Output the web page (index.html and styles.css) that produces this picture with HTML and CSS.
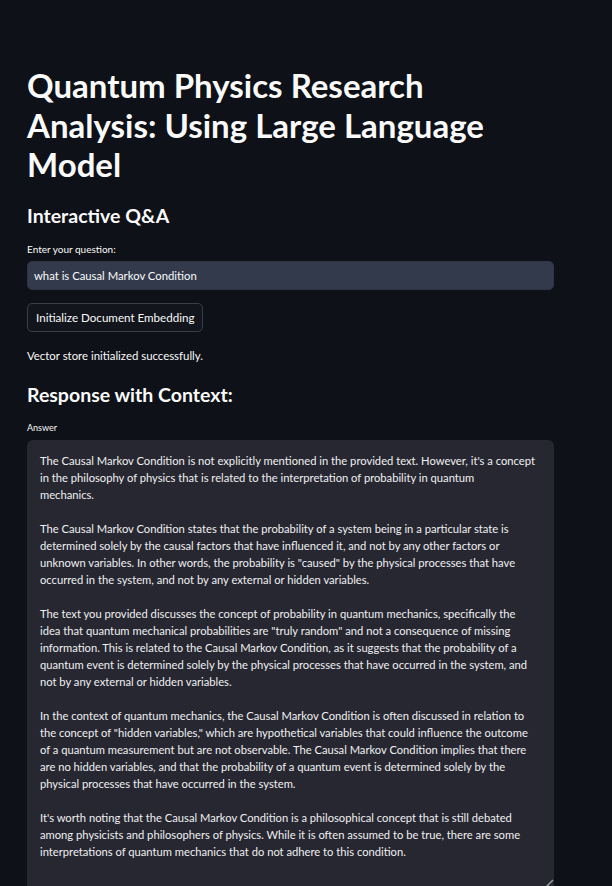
FILE: index.html
```html
<!DOCTYPE html>
<html>
<head>
<meta charset="utf-8">
<link rel="stylesheet" href="styles.css">
</head>
<body>
<main class="main">
  <h1 class="title">Quantum Physics Research<br>Analysis: Using Large Language<br>Model</h1>
  <h2 class="subhead">Interactive Q&amp;A</h2>
  <label class="label">Enter your question:</label>
  <div class="input">what is Causal Markov Condition</div>
  <button class="btn">Initialize Document Embedding</button>
  <p class="status">Vector store initialized successfully.</p>
  <h2 class="subhead resp">Response with Context:</h2>
  <label class="label answer-label">Answer</label>
  <div class="textarea">
    <p>The Causal Markov Condition is not explicitly mentioned in the provided text. However, it's a concept<br>in the philosophy of physics that is related to the interpretation of probability in quantum<br>mechanics.</p>
    <p>The Causal Markov Condition states that the probability of a system being in a particular state is<br>determined solely by the causal factors that have influenced it, and not by any other factors or<br>unknown variables. In other words, the probability is "caused" by the physical processes that have<br>occurred in the system, and not by any external or hidden variables.</p>
    <p>The text you provided discusses the concept of probability in quantum mechanics, specifically the<br>idea that quantum mechanical probabilities are "truly random" and not a consequence of missing<br>information. This is related to the Causal Markov Condition, as it suggests that the probability of a<br>quantum event is determined solely by the physical processes that have occurred in the system, and<br>not by any external or hidden variables.</p>
    <p>In the context of quantum mechanics, the Causal Markov Condition is often discussed in relation to<br>the concept of "hidden variables," which are hypothetical variables that could influence the outcome<br>of a quantum measurement but are not observable. The Causal Markov Condition implies that there<br>are no hidden variables, and that the probability of a quantum event is determined solely by the<br>physical processes that have occurred in the system.</p>
    <p>It's worth noting that the Causal Markov Condition is a philosophical concept that is still debated<br>among physicists and philosophers of physics. While it is often assumed to be true, there are some<br>interpretations of quantum mechanics that do not adhere to this condition.</p>
    <svg class="grip" width="10" height="10" viewBox="0 0 10 10"><path d="M9 2 L2 9" stroke="#9a9ba3" stroke-width="1.5"/></svg>
  </div>
</main>
</body>
</html>
```
FILE: styles.css
```css
html, body {
  margin: 0;
  padding: 0;
  background: #0e1117;
  height: 886px;
  overflow: hidden;
}
body {
  font-family: "Lato", "Noto Sans", sans-serif;
  color: #fafafa;
}
.main {
  width: 527px;
  padding: 66px 0 0 27px;
  display: flex;
  flex-direction: column;
  align-items: flex-start;
}
.title {
  margin: 0;
  font-size: 33px;
  line-height: 39.5px;
  font-weight: 700;
  letter-spacing: 0;
}
.subhead {
  margin: 18px 0 0;
  font-size: 19.5px;
  line-height: 26px;
  font-weight: 700;
}
.label {
  margin-top: 13px;
  font-size: 10px;
  line-height: 14px;
  color: #fafafa;
}
.input {
  box-sizing: border-box;
  margin-top: 5px;
  width: 527px;
  height: 29px;
  background: #333a4c;
  border: 1px solid #2f3445;
  border-radius: 5px;
  padding: 0 6px;
  font-size: 11.3px;
  line-height: 27px;
  color: #fafafa;
}
.btn {
  margin-top: 13px;
  height: 29px;
  padding: 0 8px;
  background: #12151c;
  border: 1px solid #3b3e48;
  border-radius: 5px;
  color: #fafafa;
  font-family: inherit;
  font-size: 11.6px;
}
.status {
  margin: 16px 0 0;
  font-size: 11.4px;
  line-height: 16px;
}
.resp {
  margin-top: 18px;
}
.answer-label {
  margin-top: 13px;
  font-size: 9px;
}
.textarea {
  position: relative;
  box-sizing: border-box;
  margin-top: 5px;
  width: 527px;
  height: 460px;
  background: #262730;
  border-radius: 6px;
  padding: 12px 13px;
  font-size: 11.2px;
  line-height: 17px;
  color: #f0f0f2;
  white-space: nowrap;
}
.textarea p {
  margin: 0 0 17px;
}
.grip {
  position: absolute;
  right: 0;
  top: 438px;
}
```
